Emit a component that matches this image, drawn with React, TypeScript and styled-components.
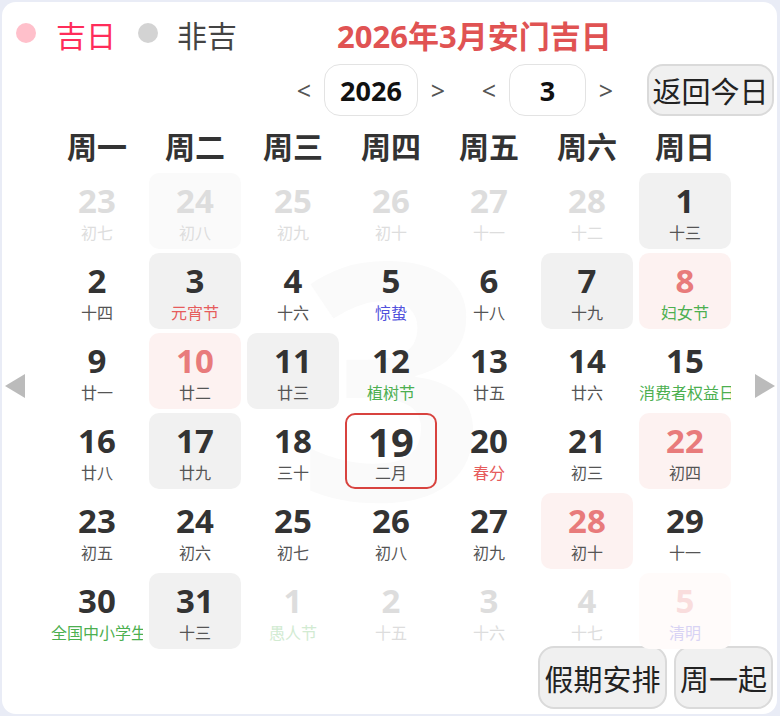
import React from "react";
import styled, { createGlobalStyle } from "styled-components";

type CellTone = "plain" | "gray" | "pink" | "grayFaint" | "pinkFaint" | "today";
type NumTone = "dark" | "pink" | "muted" | "mutedPink";
type NoteTone = "plain" | "red" | "blue" | "green" | "muted" | "mutedGreen" | "mutedPurple";

type Day = {
  n: number;
  lunar: string;
  cell?: CellTone;
  num?: NumTone;
  note?: NoteTone;
};

const faded = (n: number, lunar: string, cell: CellTone = "plain"): Day => ({
  n,
  lunar,
  cell,
  num: "muted",
  note: "muted",
});

const days: Day[] = [
  faded(23, "初七"),
  faded(24, "初八", "grayFaint"),
  faded(25, "初九"),
  faded(26, "初十"),
  faded(27, "十一"),
  faded(28, "十二"),
  { n: 1, lunar: "十三", cell: "gray" },

  { n: 2, lunar: "十四" },
  { n: 3, lunar: "元宵节", cell: "gray", note: "red" },
  { n: 4, lunar: "十六" },
  { n: 5, lunar: "惊蛰", note: "blue" },
  { n: 6, lunar: "十八" },
  { n: 7, lunar: "十九", cell: "gray" },
  { n: 8, lunar: "妇女节", cell: "pink", num: "pink", note: "green" },

  { n: 9, lunar: "廿一" },
  { n: 10, lunar: "廿二", cell: "pink", num: "pink" },
  { n: 11, lunar: "廿三", cell: "gray" },
  { n: 12, lunar: "植树节", note: "green" },
  { n: 13, lunar: "廿五" },
  { n: 14, lunar: "廿六" },
  { n: 15, lunar: "消费者权益日", note: "green" },

  { n: 16, lunar: "廿八" },
  { n: 17, lunar: "廿九", cell: "gray" },
  { n: 18, lunar: "三十" },
  { n: 19, lunar: "二月", cell: "today" },
  { n: 20, lunar: "春分", note: "red" },
  { n: 21, lunar: "初三" },
  { n: 22, lunar: "初四", cell: "pink", num: "pink" },

  { n: 23, lunar: "初五" },
  { n: 24, lunar: "初六" },
  { n: 25, lunar: "初七" },
  { n: 26, lunar: "初八" },
  { n: 27, lunar: "初九" },
  { n: 28, lunar: "初十", cell: "pink", num: "pink" },
  { n: 29, lunar: "十一" },

  { n: 30, lunar: "全国中小学生安全教育日", note: "green" },
  { n: 31, lunar: "十三", cell: "gray" },
  { n: 1, lunar: "愚人节", num: "muted", note: "mutedGreen" },
  faded(2, "十五"),
  faded(3, "十六"),
  faded(4, "十七"),
  { n: 5, lunar: "清明", cell: "pinkFaint", num: "mutedPink", note: "mutedPurple" },
];

const weekdays = ["周一", "周二", "周三", "周四", "周五", "周六", "周日"];

const cellBg: Record<CellTone, string> = {
  plain: "transparent",
  gray: "#f1f1f1",
  pink: "#fdf2f1",
  grayFaint: "#fafafa",
  pinkFaint: "#fffbfa",
  today: "transparent",
};

const numColor: Record<NumTone, string> = {
  dark: "#333333",
  pink: "#e87b7b",
  muted: "#dddddd",
  mutedPink: "#f9dddd",
};

const noteColor: Record<NoteTone, string> = {
  plain: "#555555",
  red: "#e65c5c",
  blue: "#5252dc",
  green: "#4caf50",
  muted: "#dddddd",
  mutedGreen: "#d2ebd2",
  mutedPurple: "#d8d3f4",
};

const GlobalStyle = createGlobalStyle`
  html, body {
    margin: 0;
    padding: 0;
  }
  body {
    font-family: "Noto Sans", "Noto Sans CJK SC", sans-serif;
  }
  button {
    font-family: inherit;
  }
`;

const Page = styled.div`
  width: 780px;
  height: 716px;
  box-sizing: border-box;
  padding: 2px 3px 2px 2px;
  background: #e9ecf6;
`;

const Card = styled.div`
  height: 100%;
  box-sizing: border-box;
  padding-top: 8px;
  background: #ffffff;
  border-radius: 14px;
  display: flex;
  flex-direction: column;
`;

const Legend = styled.div`
  height: 52px;
  display: flex;
  align-items: center;
  padding-left: 14px;
`;

const Dot = styled.span<{ $color: string }>`
  width: 20px;
  height: 20px;
  border-radius: 50%;
  background: ${(p) => p.$color};
  margin-top: -6px;
`;

const LegendText = styled.span<{ $color: string; $gap: number }>`
  font-size: 30px;
  line-height: 52px;
  color: ${(p) => p.$color};
  margin-left: ${(p) => p.$gap}px;
  margin-right: 22px;
`;

const Title = styled.h1`
  margin: 0 0 0 78px;
  font-size: 31px;
  line-height: 52px;
  font-weight: 700;
  color: #e05353;
`;

const Controls = styled.div`
  margin-top: 2px;
  height: 52px;
  display: flex;
  justify-content: flex-end;
  align-items: center;
  padding-right: 3px;
`;

const NavGroup = styled.div`
  display: flex;
  align-items: center;
  & + & {
    margin-left: 11px;
  }
`;

const Arrow = styled.button`
  width: 40px;
  height: 52px;
  padding: 0;
  border: none;
  background: none;
  font-size: 25px;
  color: #555555;
  cursor: pointer;
`;

const ValueBox = styled.div<{ $width: number }>`
  width: ${(p) => p.$width}px;
  height: 52px;
  box-sizing: border-box;
  border: 1.5px solid #e3e3e3;
  border-radius: 16px;
  display: flex;
  align-items: center;
  justify-content: center;
  font-size: 27px;
  font-weight: 700;
  color: #111111;
`;

const GrayButton = styled.button<{ $width: number; $height: number }>`
  width: ${(p) => p.$width}px;
  height: ${(p) => p.$height}px;
  box-sizing: border-box;
  padding: 0;
  border: 2px solid #dadada;
  border-radius: 16px;
  background: #f0f0f0;
  font-size: 29px;
  color: #222222;
  white-space: nowrap;
  cursor: pointer;
`;

const TodayButton = styled(GrayButton)`
  margin-left: 21px;
`;

const Main = styled.div`
  margin-top: 7px;
  display: flex;
`;

const Side = styled.div<{ $width: number; $right?: boolean }>`
  width: ${(p) => p.$width}px;
  display: flex;
  align-items: center;
  justify-content: ${(p) => (p.$right ? "flex-end" : "flex-start")};
  padding: ${(p) => (p.$right ? "0 2px 0 0" : "0 0 0 3px")};
  box-sizing: border-box;
`;

const Center = styled.div`
  width: 680px;
`;

const WeekRow = styled.div`
  height: 48px;
  box-sizing: border-box;
  padding-bottom: 4px;
  display: grid;
  grid-template-columns: repeat(7, 92px);
  column-gap: 6px;
  align-items: center;
  margin-bottom: 2px;
`;

const WeekName = styled.div`
  text-align: center;
  font-size: 30px;
  font-weight: 700;
  color: #333333;
`;

const GridWrap = styled.div`
  position: relative;
`;

const Watermark = styled.div`
  position: absolute;
  left: 2px;
  right: 0;
  top: 34px;
  text-align: center;
  font-size: 330px;
  line-height: 1;
  font-weight: 700;
  color: #fafafa;
  pointer-events: none;
  user-select: none;
`;

const Grid = styled.div`
  position: relative;
  display: grid;
  grid-template-columns: repeat(7, 92px);
  grid-auto-rows: 76px;
  gap: 4px 6px;
`;

const Cell = styled.div<{ $tone: CellTone }>`
  box-sizing: border-box;
  border-radius: 10px;
  background: ${(p) => cellBg[p.$tone]};
  border: ${(p) => (p.$tone === "today" ? "2px solid #d8433f" : "none")};
  padding-top: ${(p) => (p.$tone === "today" ? "6px" : "10px")};
  display: flex;
  flex-direction: column;
  align-items: center;
  overflow: hidden;
`;

const DayNum = styled.div<{ $tone: NumTone; $big?: boolean }>`
  height: 36px;
  font-size: ${(p) => (p.$big ? "40px" : "33px")};
  line-height: ${(p) => (p.$big ? "42px" : "36px")};
  font-weight: 700;
  color: ${(p) => numColor[p.$tone]};
  margin-bottom: ${(p) => (p.$big ? "6px" : "4px")};
`;

const Lunar = styled.div<{ $tone: NoteTone }>`
  width: 100%;
  font-size: 16px;
  line-height: 20px;
  text-align: center;
  white-space: nowrap;
  overflow: hidden;
  color: ${(p) => noteColor[p.$tone]};
`;

const Footer = styled.div`
  margin-top: -3px;
  display: flex;
  justify-content: flex-end;
  gap: 7px;
  padding-right: 4px;
`;

const Triangle = ({ right }: { right?: boolean }) => (
  <svg width="20" height="24" viewBox="0 0 20 24">
    <polygon points={right ? "0,0 20,12 0,24" : "20,0 0,12 20,24"} fill="#bbbbbb" />
  </svg>
);

export default function App() {
  return (
    <>
      <GlobalStyle />
      <Page>
        <Card>
          <Legend>
            <Dot $color="#ffc0cb" />
            <LegendText $color="#ff2d5a" $gap={20}>
              吉日
            </LegendText>
            <Dot $color="#d3d3d3" />
            <LegendText $color="#444444" $gap={19}>
              非吉
            </LegendText>
            <Title>2026年3月安门吉日</Title>
          </Legend>

          <Controls>
            <NavGroup>
              <Arrow>&lt;</Arrow>
              <ValueBox $width={94}>2026</ValueBox>
              <Arrow>&gt;</Arrow>
            </NavGroup>
            <NavGroup>
              <Arrow>&lt;</Arrow>
              <ValueBox $width={77}>3</ValueBox>
              <Arrow>&gt;</Arrow>
            </NavGroup>
            <TodayButton $width={127} $height={52}>
              返回今日
            </TodayButton>
          </Controls>

          <Main>
            <Side $width={49}>
              <Triangle />
            </Side>
            <Center>
              <WeekRow>
                {weekdays.map((w) => (
                  <WeekName key={w}>{w}</WeekName>
                ))}
              </WeekRow>
              <GridWrap>
                <Watermark>3</Watermark>
                <Grid>
                  {days.map((d, i) => (
                    <Cell key={i} $tone={d.cell ?? "plain"}>
                      <DayNum $tone={d.num ?? "dark"} $big={d.cell === "today"}>
                        {d.n}
                      </DayNum>
                      <Lunar $tone={d.note ?? "plain"}>{d.lunar}</Lunar>
                    </Cell>
                  ))}
                </Grid>
              </GridWrap>
            </Center>
            <Side $width={46} $right>
              <Triangle right />
            </Side>
          </Main>

          <Footer>
            <GrayButton $width={129} $height={63}>
              假期安排
            </GrayButton>
            <GrayButton $width={99} $height={63}>
              周一起
            </GrayButton>
          </Footer>
        </Card>
      </Page>
    </>
  );
}
